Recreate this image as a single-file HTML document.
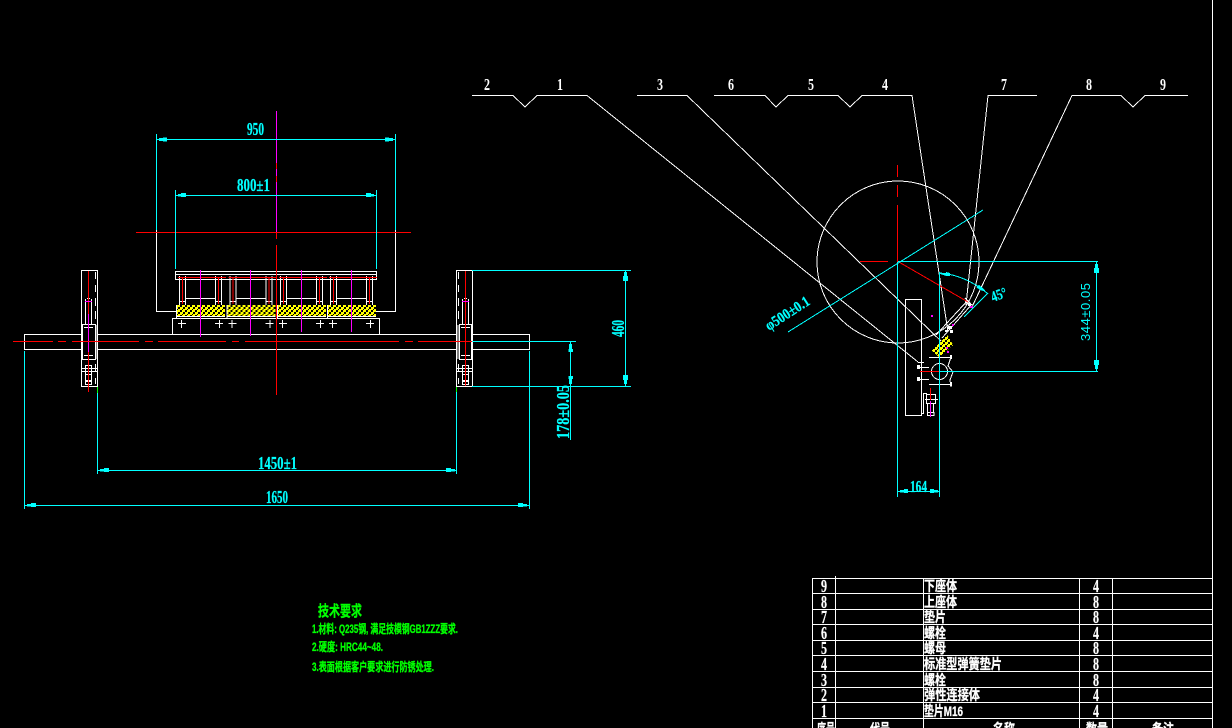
<!DOCTYPE html>
<html><head><meta charset="utf-8"><style>
html,body{margin:0;padding:0;background:#000;overflow:hidden;width:1232px;height:728px}
svg{display:block}
text{font-family:"Liberation Serif","WenQuanYi Zen Hei","Noto Sans CJK SC",serif}
.c{fill:#0ff;font-weight:bold;stroke:#0ff;stroke-width:.25px}
.w{fill:#fff;font-weight:bold;font-size:18px;stroke:#fff;stroke-width:.2px}
.b{fill:#fff;font-weight:bold;font-size:17px}
.z{fill:#fff;font-weight:bold;font-size:14px;stroke:#fff;stroke-width:.3px;font-family:"Liberation Sans","WenQuanYi Zen Hei","Noto Sans CJK SC",sans-serif}
.g{fill:#0f0;font-weight:bold;stroke:#0f0;stroke-width:.35px;font-family:"Liberation Sans","WenQuanYi Zen Hei","Noto Sans CJK SC",sans-serif}
</style></head><body>
<svg width="1232" height="728" viewBox="0 0 1232 728" xmlns="http://www.w3.org/2000/svg" shape-rendering="crispEdges">
<defs>
<pattern id="h" width="5" height="5" patternUnits="userSpaceOnUse">
<rect width="5" height="5" fill="#ff0"/><rect x="0" y="0" width="2" height="2" fill="#000"/><rect x="3" y="2" width="2" height="2" fill="#000"/><rect x="2" y="4" width="1" height="1" fill="#000"/>
</pattern>
<g id="mod">
<path d="M179.5 276V305M185.5 276V305M215.5 276V305M221.5 276V305M185.5 298.5H215.5M185.5 279.5H215.5" stroke="#fff" fill="none"/>
<path d="M179 301.5H185M215 301.5H222M179 277.5H186M215 277.5H222" stroke="#fff" fill="none"/>
<path d="M182.5 277V304M218.5 277V304M178 277.5H226" stroke="#f00" fill="none"/>
<rect x="176" y="305" width="49" height="11" fill="url(#h)"/>
<path d="M176.5 316.5H225M176.5 305V318" stroke="#fff" fill="none"/>
<path d="M178 323.5H186M181.5 320V328M215 323.5H223M219.5 320V328" stroke="#fff" fill="none"/>
</g>
</defs>
<rect width="1232" height="728" fill="#000"/>
<path d="M1212.5 0V728" stroke="#fff"/>

<!-- white body outline -->
<path d="M156.5 230V311.5H176M395.5 230V311.5H376" stroke="#fff" fill="none"/>
<path d="M175.5 271.5H376.5V279.5H175.5ZM175.5 274.5H376.5" stroke="#fff" fill="none"/>
<use href="#mod"/><use href="#mod" x="50.5"/><use href="#mod" x="101"/><use href="#mod" x="151"/>
<path d="M172.5 334V318.5H379.5V334" stroke="#fff" fill="none"/>
<path d="M24.5 334.5H529.5V349.5H24.5Z" stroke="#fff" fill="none"/>
<!-- centre line -->
<path d="M13 341.5H53M58 341.5H66M72 341.5H139M145 341.5H153M158 341.5H226M232 341.5H239M245 341.5H399M405 341.5H413M418 341.5H472" stroke="#f00" fill="none"/>
<path d="M472 341.5H576" stroke="#0ff"/>
<!-- left bracket -->
<g fill="none">
<rect x="81.5" y="270.5" width="16" height="116" fill="#000" stroke="#fff"/>
<path d="M95.5 272V279M95.5 285V292M95.5 298V306M95.5 311V319" stroke="#fff"/>
<path d="M95.5 364V371M95.5 378V384" stroke="#fff"/>
<path d="M85.5 299V325M91.5 299V325M87 298.5H90" stroke="#fff"/>
<rect x="82.5" y="324.5" width="13" height="35" fill="#000" stroke="#fff"/>
<path d="M84 327.5H93M88.5 325V331M84 355.5H93M88.5 352V358M96 325V359M81.5 368.5H97M81.5 371.5H97M85.5 365V381M91.5 365V381M85.5 365.5H91M85.5 374.5H91.5V380.5H85.5ZM85.5 381.5H91.5V384.5H85.5Z" stroke="#fff"/>
<path d="M88.5 271V392" stroke="#f00"/>
<path d="M88.5 314V352M85 301.5H92" stroke="#f0f"/>
<path d="M81 341.5H98" stroke="#f00"/>
</g>
<!-- right bracket -->
<g fill="none">
<rect x="456.5" y="270.5" width="16" height="116" fill="#000" stroke="#fff"/>
<path d="M458.5 272V279M458.5 285V292M458.5 298V306M458.5 311V319M458.5 364V371M458.5 378V384" stroke="#fff"/>
<path d="M462.5 299V325M468.5 299V325M464 298.5H467" stroke="#fff"/>
<rect x="459.5" y="324.5" width="12" height="35" fill="#000" stroke="#fff"/>
<path d="M461 327.5H470M465.5 325V331M461 355.5H470M465.5 352V358M458 325V359M456.5 368.5H472M456.5 371.5H472M462.5 365V381M468.5 365V381M462.5 365.5H468M462.5 374.5H468.5V380.5H462.5ZM462.5 381.5H468.5V384.5H462.5Z" stroke="#fff"/>
<path d="M465.5 271V386" stroke="#f00"/>
<path d="M462 301.5H469" stroke="#f0f"/>
<path d="M456 341.5H472" stroke="#f00"/><path d="M472 341.5H576" stroke="#0ff"/>
</g>
<!-- magenta / red centre lines -->
<path d="M200.5 270V337M250.5 270V336M301.5 270V332M351.5 270V332" stroke="#f0f" fill="none"/>
<path d="M276.5 111V163M276.5 169V176M276.5 182V232" stroke="#f0f" fill="none"/>
<path d="M276.5 163V169M276.5 176V182M276.5 232V239M276.5 245V395" stroke="#f00" fill="none"/>
<path d="M136 232.5H411" stroke="#f00"/>

<!-- left dimensions -->
<g fill="none" stroke="#0ff">
<path d="M156.5 134V230M395.5 134V230M157 139.5H395M175.5 190V269M376.5 190V269M176 195.5H376"/>
<path d="M472 270.5H631M472 386.5H631M625.5 270V386M570.5 342V440"/>
<path d="M97.5 393V474M456.5 392V474M98 470.5H457M24.5 351V509M529.5 351V509M25 505.5H529"/>
</g>
<path d="M97.5 387V393M456.5 387V392" stroke="#0f0" fill="none"/>
<g fill="#0ff">
<path d="M159 138H163V137.5H167V141.5H163V141H159ZM393 138H389V137.5H385V141.5H389V141H393Z"/>
<path d="M178 194H181V193H186V197H181V196.5H178ZM374 194H371V193H366V197H371V196.5H374Z"/>
<path d="M624 272H627V276H628V281H623V276H624ZM624 384H627V380H628V375H623V380H624Z"/>
<path d="M569 344H572V349H573V352H568.5V349H569ZM569 384H572V379H573V376H568.5V379H569Z"/>
<path d="M100 469H104V468H109V472H104V471.5H100ZM455 469H451V468H446V472H451V471.5H455Z"/>
<path d="M27 504H31V503H36V507H31V506.5H27ZM527 504H523V503H518V507H523V506.5H527Z"/>
</g>
<text x="247" y="135" class="c" font-size="18" textLength="17" lengthAdjust="spacingAndGlyphs">950</text>
<text x="237" y="191" class="c" font-size="18" textLength="33" lengthAdjust="spacingAndGlyphs">800±1</text>
<text x="258" y="469" class="c" font-size="18" textLength="39" lengthAdjust="spacingAndGlyphs">1450±1</text>
<text x="266" y="503" class="c" font-size="18" textLength="22" lengthAdjust="spacingAndGlyphs">1650</text>
<text transform="translate(624,337) rotate(-90)" class="c" font-size="18" textLength="17" lengthAdjust="spacingAndGlyphs">460</text>
<text transform="translate(569,439) rotate(-90)" class="c" font-size="18" textLength="54" lengthAdjust="spacingAndGlyphs">178±0.05</text>

<!-- leaders -->
<g fill="none" stroke="#fff">
<path d="M472 95.5H513L525 107L537 95.5H587L918 362"/>
<path d="M637 95.5H687L945 345"/>
<path d="M714 95.5H765L776 107L788 95.5H838L850 107L862 95.5H912L948 332"/>
<path d="M1037 95.5H988L966 305"/>
<path d="M1188 95.5H1145L1133 107L1121 95.5H1072L972 307"/>
<circle cx="898" cy="262" r="81"/>
<path d="M968 300L936 335M972 304L942 338M965 298L971 304"/>
<rect x="905.5" y="299.5" width="16" height="116"/>
<path d="M923.5 393V413M924 362.5H918M929 367.5H919.5M924 379.5H919.5M929 379.5H921M923.5 393.5H927M921 413.5H924"/>
<path d="M929 357.5H952M929 384.5H951M951 357L948 366L953 372L950 380L951 387M939.5 345V390"/>
<circle cx="939.5" cy="371.5" r="8"/>
<path d="M925 399.5H938M926.5 394.5H935.5V403.5H926.5ZM927.5 403V412M933.5 403V412M927.5 412.5H934V415.5H927.5Z"/>
</g>
<g fill="#fff"><path d="M917 365h3v4h-3zM917 377h3v4h-3zM950 355h2v4h-2zM950 382h2v4h-2zM948 326h4v3h-4zM950 330h3v3h-3zM945 330h3v2h-3zM965 300h3v3h-3zM968 303h3v3h-3z"/></g>
<path d="M931.7 350.7L947.3 335L953.3 345L939.3 357.3Z" fill="url(#h)"/>
<g fill="none" stroke="#f00">
<path d="M860 261.5H888M898 261.5L968 302M920 371.5H939M930.5 388V400M897.5 165V177M897.5 185V197M897.5 205V262"/>
</g>
<path d="M930.5 401V417" stroke="#f0f" fill="none"/>
<path d="M931 315h2v2h-2zM952 324h2v2h-2zM970 306h3v2h-3zM946 347h2v2h-2zM947 351h2v2h-2z" fill="#f0f"/>
<g fill="none" stroke="#0ff">
<path d="M898 261.5H1098M939.5 371.5H1098M1096.5 262V371M788 332L983 210M964 317L988 293"/>
<path d="M897.5 262V497M939.5 272V497M898 491.5H940"/>
<path d="M940 273Q965 275 987 293"/>
</g>
<g fill="#0ff">
<path d="M1095 264H1098V268H1099V273H1094V268H1095ZM1095 369H1098V365H1099V360H1094V365H1095Z"/>
<path d="M940 273L946 274V272L950 273V276L946 276L940 274ZM980 290L976 287L979 285L984 289L986 292Z"/>
<path d="M900 490H904V489H908V493H904V492.5H900ZM938 490H934V489H930V493H934V492.5H938Z"/>
</g>
<text x="910" y="492" class="c" font-size="17" textLength="17" lengthAdjust="spacingAndGlyphs">164</text>
<text transform="translate(1090,341) rotate(-90)" fill="#0ff" font-size="13" textLength="58" style="font-family:'Liberation Sans',sans-serif">344±0.05</text>
<text transform="translate(769,331) rotate(-33)" class="c" font-size="15" textLength="50" lengthAdjust="spacingAndGlyphs">φ500±0.1</text>
<text transform="translate(993,302) rotate(-20)" class="c" font-size="15" textLength="16" lengthAdjust="spacingAndGlyphs">45°</text>

<!-- balloon numbers -->
<text x="484" y="90" class="b" textLength="6" lengthAdjust="spacingAndGlyphs">2</text><text x="557" y="90" class="b" textLength="6" lengthAdjust="spacingAndGlyphs">1</text><text x="657" y="90" class="b" textLength="6" lengthAdjust="spacingAndGlyphs">3</text>
<text x="728" y="90" class="b" textLength="6" lengthAdjust="spacingAndGlyphs">6</text><text x="808" y="90" class="b" textLength="6" lengthAdjust="spacingAndGlyphs">5</text><text x="882" y="90" class="b" textLength="6" lengthAdjust="spacingAndGlyphs">4</text>
<text x="1001" y="90" class="b" textLength="6" lengthAdjust="spacingAndGlyphs">7</text><text x="1086" y="90" class="b" textLength="6" lengthAdjust="spacingAndGlyphs">8</text><text x="1160" y="90" class="b" textLength="6" lengthAdjust="spacingAndGlyphs">9</text>

<!-- notes -->
<text x="318" y="616" class="g" font-size="15" textLength="44" lengthAdjust="spacingAndGlyphs">技术要求</text>
<text x="312" y="633" class="g" font-size="12" textLength="146" lengthAdjust="spacingAndGlyphs">1.材料: Q235钢, 满足技模钢GB1ZZZ要求.</text>
<text x="312" y="651" class="g" font-size="12" textLength="71" lengthAdjust="spacingAndGlyphs">2.硬度: HRC44~48.</text>
<text x="312" y="671" class="g" font-size="12" textLength="122" lengthAdjust="spacingAndGlyphs">3.表面根据客户要求进行防锈处理.</text>

<!-- table -->
<g fill="none" stroke="#fff">
<path d="M812.5 578.5H1212M812.5 593.5H1212M812.5 609.5H1212M812.5 624.5H1212M812.5 640.5H1212M812.5 655.5H1212M812.5 671.5H1212M812.5 687.5H1212M812.5 702.5H1212M812.5 718.5H1212"/>
<path d="M812.5 578V728M835.5 576V728M923.5 578V728M1079.5 578V728M1112.5 578V728"/>
</g>
<text x="821" y="592" class="w" textLength="6" lengthAdjust="spacingAndGlyphs">9</text>
<text x="821" y="608" class="w" textLength="6" lengthAdjust="spacingAndGlyphs">8</text>
<text x="821" y="623" class="w" textLength="6" lengthAdjust="spacingAndGlyphs">7</text>
<text x="821" y="639" class="w" textLength="6" lengthAdjust="spacingAndGlyphs">6</text>
<text x="821" y="654" class="w" textLength="6" lengthAdjust="spacingAndGlyphs">5</text>
<text x="821" y="670" class="w" textLength="6" lengthAdjust="spacingAndGlyphs">4</text>
<text x="821" y="686" class="w" textLength="6" lengthAdjust="spacingAndGlyphs">3</text>
<text x="821" y="701" class="w" textLength="6" lengthAdjust="spacingAndGlyphs">2</text>
<text x="821" y="717" class="w" textLength="6" lengthAdjust="spacingAndGlyphs">1</text>
<text x="1093" y="592" class="w" textLength="6" lengthAdjust="spacingAndGlyphs">4</text>
<text x="1093" y="608" class="w" textLength="6" lengthAdjust="spacingAndGlyphs">8</text>
<text x="1093" y="623" class="w" textLength="6" lengthAdjust="spacingAndGlyphs">8</text>
<text x="1093" y="639" class="w" textLength="6" lengthAdjust="spacingAndGlyphs">4</text>
<text x="1093" y="654" class="w" textLength="6" lengthAdjust="spacingAndGlyphs">8</text>
<text x="1093" y="670" class="w" textLength="6" lengthAdjust="spacingAndGlyphs">8</text>
<text x="1093" y="686" class="w" textLength="6" lengthAdjust="spacingAndGlyphs">8</text>
<text x="1093" y="701" class="w" textLength="6" lengthAdjust="spacingAndGlyphs">4</text>
<text x="1093" y="717" class="w" textLength="6" lengthAdjust="spacingAndGlyphs">4</text>
<text x="924" y="591" class="z" textLength="33" lengthAdjust="spacingAndGlyphs">下座体</text>
<text x="924" y="607" class="z" textLength="33" lengthAdjust="spacingAndGlyphs">上座体</text>
<text x="924" y="622" class="z" textLength="22" lengthAdjust="spacingAndGlyphs">垫片</text>
<text x="924" y="638" class="z" textLength="22" lengthAdjust="spacingAndGlyphs">螺栓</text>
<text x="924" y="653" class="z" textLength="22" lengthAdjust="spacingAndGlyphs">螺母</text>
<text x="924" y="669" class="z" textLength="78" lengthAdjust="spacingAndGlyphs">标准型弹簧垫片</text>
<text x="924" y="685" class="z" textLength="22" lengthAdjust="spacingAndGlyphs">螺栓</text>
<text x="924" y="700" class="z" textLength="56" lengthAdjust="spacingAndGlyphs">弹性连接体</text>
<text x="924" y="716" class="z" textLength="39" lengthAdjust="spacingAndGlyphs">垫片M16</text>
<text x="817" y="734" class="z" textLength="18" lengthAdjust="spacingAndGlyphs">序号</text>
<text x="870" y="734" class="z" textLength="20" lengthAdjust="spacingAndGlyphs">代号</text>
<text x="993" y="734" class="z" textLength="22" lengthAdjust="spacingAndGlyphs">名称</text>
<text x="1086" y="734" class="z" textLength="22" lengthAdjust="spacingAndGlyphs">数量</text>
<text x="1152" y="734" class="z" textLength="22" lengthAdjust="spacingAndGlyphs">备注</text>
</svg>
</body></html>
